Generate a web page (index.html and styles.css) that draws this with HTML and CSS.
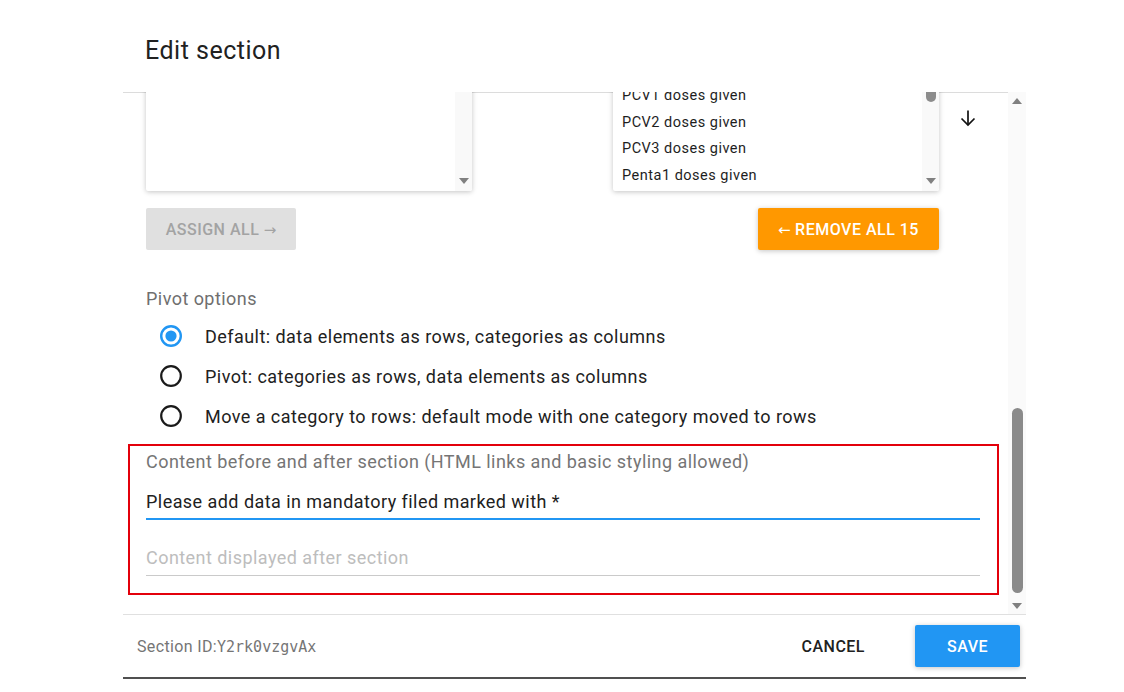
FILE: index.html
```html
<!DOCTYPE html>
<html lang="en">
<head>
<meta charset="utf-8">
<title>Edit section</title>
<link rel="stylesheet" href="styles.css">
</head>
<body>
<div class="dialog">
  <h2 class="dialog-title">Edit section</h2>
  <div class="dialog-body">
    <div class="scroll-content">
      <div class="content-inner">
        <div class="group-editor">
          <div class="listbox">
            <ul class="list"></ul>
            <div class="list-scroll">
              <span class="spacer"></span>
              <span class="tri-down"></span>
            </div>
          </div>
          <div class="middle"></div>
          <div class="listbox">
            <ul class="list">
              <li>PCV1 doses given</li>
              <li>PCV2 doses given</li>
              <li>PCV3 doses given</li>
              <li>Penta1 doses given</li>
            </ul>
            <div class="list-scroll">
              <span class="list-thumb"></span>
              <span class="spacer"></span>
              <span class="tri-down"></span>
            </div>
          </div>
          <div class="sort-col">
            <button class="icon-btn" aria-label="Move down">
              <svg width="20" height="20" viewBox="0 0 20 20" fill="none" stroke="#111" stroke-width="1.7">
                <path d="M10 2.5 V17"/>
                <path d="M3.5 10.5 L10 17 L16.5 10.5"/>
              </svg>
            </button>
          </div>
          <button class="btn btn-assign">ASSIGN ALL <span class="arrow">→</span></button>
          <button class="btn btn-remove"><span class="arrow">←</span> REMOVE ALL 15</button>
        </div>

        <div class="pivot-label">Pivot options</div>
        <div class="radio-group">
          <label class="radio-row">
            <svg class="radio" width="24" height="24" viewBox="0 0 24 24">
              <circle cx="12" cy="12" r="9.8" fill="none" stroke="#2196f3" stroke-width="2.4"/>
              <circle cx="12" cy="12" r="5.6" fill="#2196f3"/>
            </svg>
            <span>Default: data elements as rows, categories as columns</span>
          </label>
          <label class="radio-row">
            <svg class="radio" width="24" height="24" viewBox="0 0 24 24">
              <circle cx="12" cy="12" r="9.8" fill="none" stroke="#1a1a1a" stroke-width="2.2"/>
            </svg>
            <span>Pivot: categories as rows, data elements as columns</span>
          </label>
          <label class="radio-row">
            <svg class="radio" width="24" height="24" viewBox="0 0 24 24">
              <circle cx="12" cy="12" r="9.8" fill="none" stroke="#1a1a1a" stroke-width="2.2"/>
            </svg>
            <span>Move a category to rows: default mode with one category moved to rows</span>
          </label>
        </div>

        <div class="highlight-box">
          <div class="field-label">Content before and after section (HTML links and basic styling allowed)</div>
          <div class="field field-focused">Please add data in mandatory filed marked with *</div>
          <div class="field field-empty">Content displayed after section</div>
        </div>
      </div>
    </div>
    <div class="main-scrollbar">
      <span class="sb-btn"><span class="tri-up"></span></span>
      <span class="spacer"></span>
      <span class="main-thumb"></span>
      <span class="sb-btn"><span class="tri-down"></span></span>
    </div>
  </div>
  <div class="dialog-footer">
    <div class="section-id">Section ID:<code>Y2rk0vzgvAx</code></div>
    <div class="footer-actions">
      <button class="btn-flat">CANCEL</button>
      <button class="btn btn-save">SAVE</button>
    </div>
  </div>
</div>
</body>
</html>
```

FILE: styles.css
```css
* { box-sizing: border-box; }

html, body {
  margin: 0;
  padding: 0;
  background: #ffffff;
}

body {
  font-family: Roboto, "Liberation Sans", Arial, sans-serif;
  color: #212121;
  letter-spacing: 0.45px;
}

.dialog {
  width: 903px;
  margin-left: 123px;
  border-bottom: 2px solid #505050;
}

.dialog-title {
  margin: 0;
  height: 92px;
  padding: 35px 0 0 22px;
  font-size: 25px;
  line-height: 32px;
  font-weight: 400;
  color: #212121;
  letter-spacing: 0.5px;
}

.dialog-body {
  display: flex;
  height: 523px;
  border-bottom: 1px solid #e0e0e0;
}

.scroll-content {
  flex: 1;
  overflow: hidden;
  background: linear-gradient(#dcdcdc, #dcdcdc) top left / 100% 1px no-repeat;
}

.content-inner {
  margin-top: -22px;
  padding: 0 28px 0 23px;
}

/* group editor */
.group-editor {
  display: grid;
  grid-template-columns: 326px 141px 326px 1fr;
  row-gap: 17px;
}

.listbox {
  height: 121px;
  display: flex;
  background: #fff;
  border-radius: 2px;
  box-shadow: 0 1px 6px rgba(0,0,0,0.12), 0 1px 4px rgba(0,0,0,0.12);
  overflow: hidden;
}

.list {
  flex: 1;
  list-style: none;
  margin: 0;
  padding: 13px 0 0 9px;
}

.list li {
  font-size: 14.5px;
  line-height: 26.5px;
  color: #1e1e1e;
  white-space: nowrap;
  letter-spacing: 0.5px;
}

.list-scroll {
  width: 17px;
  background: #f9f9f9;
  display: flex;
  flex-direction: column;
  align-items: center;
  padding-bottom: 7px;
}

.list-thumb {
  width: 10px;
  height: 32px;
  border-radius: 0 0 5px 5px;
  background: #8c8c8c;
}

.spacer { flex: 1; }

.tri-down {
  width: 0;
  height: 0;
  border-left: 5px solid transparent;
  border-right: 5px solid transparent;
  border-top: 6px solid #808080;
}

.tri-up {
  width: 0;
  height: 0;
  border-left: 5px solid transparent;
  border-right: 5px solid transparent;
  border-bottom: 6px solid #808080;
}

.sort-col {
  padding: 36px 0 0 17px;
}

.icon-btn {
  width: 24px;
  height: 24px;
  padding: 2px;
  border: 0;
  background: transparent;
  display: flex;
  align-items: center;
  justify-content: center;
}

.btn {
  height: 42px;
  border: 0;
  border-radius: 2px;
  font-family: Roboto, "Liberation Sans", Arial, sans-serif;
  font-size: 16px;
  font-weight: 500;
  letter-spacing: 0.5px;
  padding: 0;
  white-space: nowrap;
}

.arrow {
  font-family: "DejaVu Sans", sans-serif;
  font-weight: 400;
  font-size: 15px;
  letter-spacing: 0;
}

.btn-assign {
  grid-column: 1;
  justify-self: start;
  width: 150px;
  background: #e0e0e0;
  color: #a3a3a3;
}

.btn-remove {
  grid-column: 3;
  justify-self: end;
  width: 181px;
  background: #ff9800;
  color: #ffffff;
  box-shadow: 0 1px 6px rgba(0,0,0,0.12), 0 1px 4px rgba(0,0,0,0.12);
}

/* pivot */
.pivot-label {
  margin-top: 37px;
  font-size: 18px;
  line-height: 24px;
  color: #6f6f6f;
}

.radio-group {
  margin-top: 5px;
  display: flex;
  flex-direction: column;
}

.radio-row {
  height: 40px;
  display: flex;
  align-items: center;
  gap: 22px;
  padding-left: 13px;
  font-size: 18px;
  color: #212121;
}

.radio { flex: none; }

/* highlighted content box */
.highlight-box {
  margin: 8px -19px 0 -18px;
  border: 2px solid #e3000b;
  padding: 4px 17px 17px 16px;
}

.field-label {
  font-size: 18px;
  line-height: 24px;
  color: #757575;
}

.field {
  font-size: 18px;
  line-height: 24px;
}

.field-focused {
  margin-top: 16px;
  padding-bottom: 4px;
  border-bottom: 2px solid #2196f3;
  color: #212121;
}

.field-empty {
  margin-top: 26px;
  padding-bottom: 5px;
  border-bottom: 1px solid #cacaca;
  color: #bdbdbd;
}

/* main scrollbar */
.main-scrollbar {
  width: 18px;
  background: #fafafa;
  display: flex;
  flex-direction: column;
  align-items: center;
}

.sb-btn {
  height: 17px;
  width: 100%;
  display: flex;
  align-items: center;
  justify-content: center;
}

.main-thumb {
  width: 11px;
  height: 185px;
  margin-bottom: 4px;
  border-radius: 6px;
  background: #8a8a8a;
}

/* footer */
.dialog-footer {
  height: 62px;
  display: flex;
  align-items: center;
  justify-content: space-between;
  padding: 0 6px 0 14px;
}

.section-id {
  font-size: 16px;
  color: #757575;
  letter-spacing: 0.35px;
}

.section-id code {
  font-family: "DejaVu Sans Mono", "Liberation Mono", monospace;
  font-size: 15px;
  letter-spacing: 0;
  color: #757575;
}

.footer-actions {
  display: flex;
  align-items: center;
}

.btn-flat {
  height: 36px;
  padding: 0 16px;
  margin-right: 34px;
  border: 0;
  background: transparent;
  font-family: Roboto, "Liberation Sans", Arial, sans-serif;
  font-size: 16px;
  font-weight: 500;
  letter-spacing: 0.5px;
  color: #212121;
}

.btn-save {
  width: 105px;
  background: #2196f3;
  color: #ffffff;
  box-shadow: 0 1px 6px rgba(0,0,0,0.12), 0 1px 4px rgba(0,0,0,0.12);
}
```
